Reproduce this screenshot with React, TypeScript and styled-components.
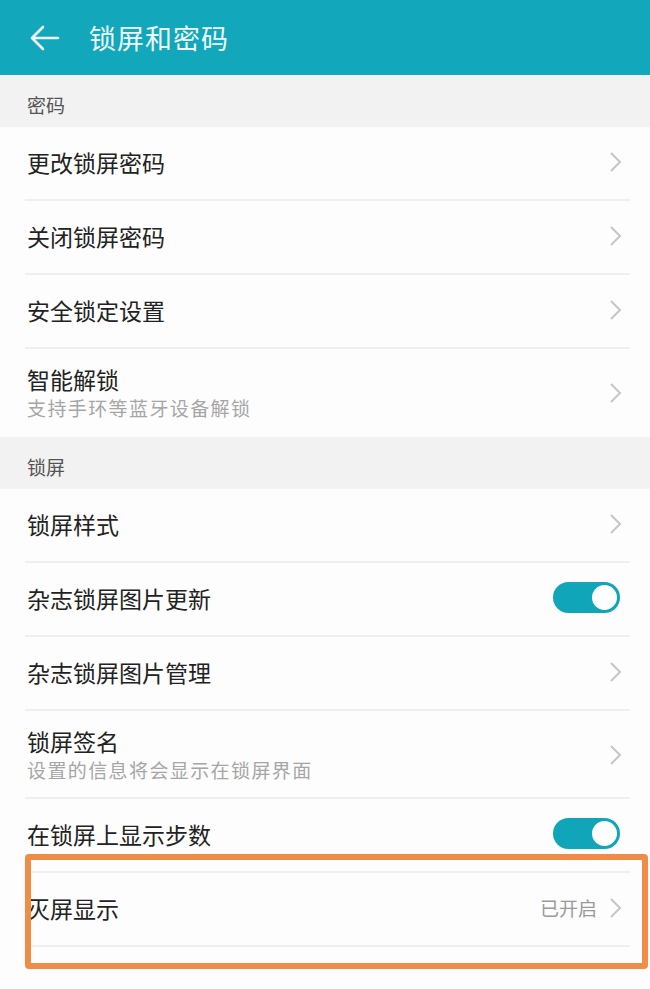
import React from "react";
import styled, { createGlobalStyle } from "styled-components";

const GlobalStyle = createGlobalStyle`
  html, body {
    margin: 0;
    padding: 0;
    background: #fdfdfd;
  }
  body {
    font-family: "Noto Sans CJK SC", "Noto Sans", sans-serif;
  }
`;

const Page = styled.div`
  width: 650px;
  min-height: 989px;
  background: #fdfdfd;
  overflow: hidden;
`;

const Header = styled.header`
  height: 75px;
  background: #12a7ba;
  display: flex;
  align-items: center;
  padding-left: 30px;
  gap: 29px;
  box-sizing: border-box;
`;

const Title = styled.h1`
  margin: 0;
  font-size: 27px;
  font-weight: 400;
  color: #eefafc;
  letter-spacing: 1px;
`;

const SectionTitle = styled.div`
  height: 52px;
  background: #f2f2f2;
  display: flex;
  align-items: center;
  padding: 7px 0 0 27px;
  box-sizing: border-box;
  font-size: 19px;
  color: #555;
`;

const Row = styled.div<{ $tall?: boolean; $last?: boolean }>`
  position: relative;
  height: ${(p) => (p.$tall ? 88 : 74)}px;
  display: flex;
  align-items: center;
  justify-content: space-between;
  padding: 0 28px ${(p) => (p.$tall ? 0 : 5)}px 27px;
  box-sizing: border-box;

  &::after {
    content: "";
    position: absolute;
    left: 25px;
    right: 20px;
    bottom: 0;
    height: 2px;
    background: ${(p) => (p.$last ? "transparent" : "#efefef")};
  }
`;

const TextBlock = styled.div`
  display: flex;
  flex-direction: column;
`;

const Label = styled.div`
  font-size: 23px;
  line-height: 30px;
  color: #222;
`;

const Sub = styled.div`
  font-size: 19px;
  line-height: 28px;
  color: #a6a6a6;
  letter-spacing: 1.4px;
`;

const Right = styled.div`
  display: flex;
  align-items: center;
  gap: 12px;
`;

const Value = styled.span`
  font-size: 19px;
  color: #9a9a9a;
`;

const Toggle = styled.div`
  width: 67px;
  height: 31px;
  border-radius: 16px;
  background: #10a5b8;
  display: flex;
  align-items: center;
  justify-content: flex-end;
  padding-right: 3px;
  box-sizing: border-box;
  margin-right: 2px;
`;

const Knob = styled.div`
  width: 25px;
  height: 25px;
  border-radius: 50%;
  background: #fff;
`;

const HighlightWrap = styled.div`
  position: relative;
`;

const Highlight = styled.div`
  position: absolute;
  left: 25px;
  right: 2px;
  top: -19px;
  bottom: -22px;
  border: 6px solid #f08d45;
  border-radius: 4px;
  pointer-events: none;
`;

const BackArrow = () => (
  <svg width="30" height="26" viewBox="0 0 30 26">
    <path
      d="M28 13H3M13 2L2 13l11 11"
      fill="none"
      stroke="#f2fbfc"
      strokeWidth="2.6"
      strokeLinecap="round"
      strokeLinejoin="round"
    />
  </svg>
);

const Chevron = () => (
  <svg width="13" height="22" viewBox="0 0 13 22">
    <polyline
      points="2,2 11,11 2,20"
      fill="none"
      stroke="#c6c6c6"
      strokeWidth="2"
    />
  </svg>
);

type Item = {
  label: string;
  sub?: string;
  toggle?: boolean;
  value?: string;
};

const passwordItems: Item[] = [
  { label: "更改锁屏密码" },
  { label: "关闭锁屏密码" },
  { label: "安全锁定设置" },
  { label: "智能解锁", sub: "支持手环等蓝牙设备解锁" },
];

const lockItems: Item[] = [
  { label: "锁屏样式" },
  { label: "杂志锁屏图片更新", toggle: true },
  { label: "杂志锁屏图片管理" },
  { label: "锁屏签名", sub: "设置的信息将会显示在锁屏界面" },
  { label: "在锁屏上显示步数", toggle: true },
];

const SettingRow = ({ item, last }: { item: Item; last?: boolean }) => (
  <Row $tall={!!item.sub} $last={last}>
    <TextBlock>
      <Label>{item.label}</Label>
      {item.sub && <Sub>{item.sub}</Sub>}
    </TextBlock>
    <Right>
      {item.value && <Value>{item.value}</Value>}
      {item.toggle ? (
        <Toggle>
          <Knob />
        </Toggle>
      ) : (
        <Chevron />
      )}
    </Right>
  </Row>
);

export default function App() {
  return (
    <Page>
      <GlobalStyle />
      <Header>
        <BackArrow />
        <Title>锁屏和密码</Title>
      </Header>
      <SectionTitle>密码</SectionTitle>
      {passwordItems.map((it, i) => (
        <SettingRow key={it.label} item={it} last={i === passwordItems.length - 1} />
      ))}
      <SectionTitle>锁屏</SectionTitle>
      {lockItems.map((it) => (
        <SettingRow key={it.label} item={it} />
      ))}
      <HighlightWrap>
        <SettingRow item={{ label: "灭屏显示", value: "已开启" }} />
        <Highlight />
      </HighlightWrap>
    </Page>
  );
}
